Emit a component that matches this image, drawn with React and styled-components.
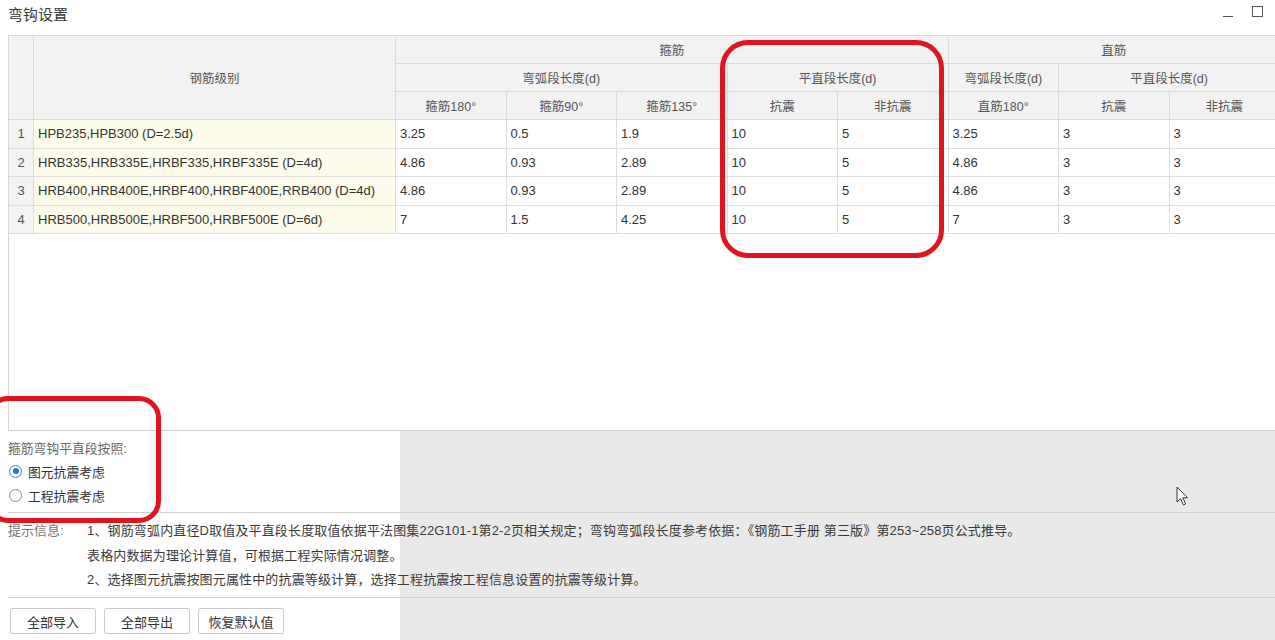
import React from 'react';
import styled, { createGlobalStyle } from 'styled-components';

const GlobalStyle = createGlobalStyle`
  html, body {
    margin: 0;
    padding: 0;
    background: #ffffff;
    font-family: "Liberation Sans", "Noto Sans CJK SC", sans-serif;
    color: #333;
    overflow: hidden;
  }
`;

const Window = styled.div`
  position: relative;
  width: 1275px;
  height: 640px;
  overflow: hidden;
  background: #fff;
`;

const TitleBar = styled.div`
  height: 35px;
  display: flex;
  align-items: center;
  justify-content: space-between;
  padding: 0 8px;
  box-sizing: border-box;
`;

const Title = styled.div`
  font-size: 15px;
  color: #3a3a3a;
  margin-top: -8px;
`;

const Controls = styled.div`
  display: flex;
  align-items: center;
  gap: 18px;
  margin-top: -12px;
  margin-right: 4px;
`;

const TablePanel = styled.div`
  margin-left: 8px;
  height: 396px;
  border-top: 1px solid #d6d6d6;
  border-left: 1px solid #d6d6d6;
  border-bottom: 1px solid #cfcfcf;
  box-sizing: border-box;
  overflow: hidden;
`;

const Grid = styled.table`
  border-collapse: collapse;
  table-layout: fixed;
  width: 1271px;
  margin: -1px 0 0 -1px;
  font-size: 13px;
`;

const HeadCell = styled.th`
  height: 28px;
  padding: 0 4px;
  box-sizing: border-box;
  background: #f2f2f2;
  border: 1px solid #dadada;
  font-weight: normal;
  font-size: 12.5px;
  color: #555;
  text-align: center;
  white-space: nowrap;
`;

const toneBg = {
  index: '#f3f3f3',
  grade: '#fdfbe9',
  value: '#ffffff',
};

const DataCell = styled.td`
  height: 28.5px;
  padding: 0 ${(p) => (p.$tone === 'index' ? '0' : '4px')};
  box-sizing: border-box;
  background: ${(p) => toneBg[p.$tone || 'value']};
  border: 1px solid #dedede;
  color: ${(p) => (p.$tone === 'index' ? '#555' : '#333')};
  text-align: ${(p) => (p.$tone === 'index' ? 'center' : 'left')};
  white-space: nowrap;
  overflow: hidden;
`;

const Bottom = styled.div`
  height: 209px;
  background: linear-gradient(to right, #ffffff 400px, #e9e9e9 400px);
`;

const OptionBlock = styled.div`
  margin-left: 8px;
  padding: 4px 0 6px;
  height: 82px;
  box-sizing: border-box;
  border-bottom: 1px solid #d2d2d2;
  font-size: 12.8px;
`;

const Line = styled.div`
  height: ${(p) => p.$h || 24}px;
  display: flex;
  align-items: center;
  color: ${(p) => (p.$muted ? '#666' : '#333')};
`;

const RadioDot = styled.span`
  width: 13px;
  height: 13px;
  margin: 0 6px 0 1px;
  border-radius: 50%;
  box-sizing: border-box;
  border: 1px solid ${(p) => (p.$on ? '#3b7ddd' : '#8a8a8a')};
  background: #fff;
  display: inline-flex;
  align-items: center;
  justify-content: center;

  &::after {
    content: '';
    width: 6px;
    height: 6px;
    border-radius: 50%;
    background: ${(p) => (p.$on ? '#2f6fd6' : 'transparent')};
  }
`;

const HintBlock = styled.div`
  margin-left: 8px;
  padding: 6px 0 4px;
  height: 85px;
  box-sizing: border-box;
  border-bottom: 1px solid #d2d2d2;
  display: grid;
  grid-template-columns: 79px 1fr;
  font-size: 13px;
`;

const HintLabel = styled.div`
  color: #777;
  line-height: 24.5px;
`;

const HintText = styled.div`
  color: #3a3a3a;
  line-height: 24.5px;
  white-space: nowrap;
  letter-spacing: 0.15px;
`;

const ButtonRow = styled.div`
  display: flex;
  gap: 8px;
  padding: 10px 0 0 10px;
`;

const Button = styled.button`
  width: 86px;
  height: 26px;
  border: 1px solid #c9c9c9;
  border-radius: 2px;
  background: #fff;
  font-family: inherit;
  font-size: 13px;
  color: #333;
  padding: 0;
`;

const Annotation = styled.div`
  position: absolute;
  left: ${(p) => p.$x}px;
  top: ${(p) => p.$y}px;
  width: ${(p) => p.$w}px;
  height: ${(p) => p.$h}px;
  border: 5px solid #e0141f;
  border-radius: ${(p) => p.$r}px;
  box-sizing: border-box;
  pointer-events: none;
`;

const Cursor = styled.svg`
  position: absolute;
  left: 1176px;
  top: 486px;
`;

const rows = [
  ['HPB235,HPB300 (D=2.5d)', '3.25', '0.5', '1.9', '10', '5', '3.25', '3', '3'],
  ['HRB335,HRB335E,HRBF335,HRBF335E (D=4d)', '4.86', '0.93', '2.89', '10', '5', '4.86', '3', '3'],
  ['HRB400,HRB400E,HRBF400,HRBF400E,RRB400 (D=4d)', '4.86', '0.93', '2.89', '10', '5', '4.86', '3', '3'],
  ['HRB500,HRB500E,HRBF500,HRBF500E (D=6d)', '7', '1.5', '4.25', '10', '5', '7', '3', '3'],
];

const App = () => {
  return (
    <Window>
      <GlobalStyle />
      <TitleBar>
        <Title>弯钩设置</Title>
        <Controls>
          <svg width="11" height="12" viewBox="0 0 11 12">
            <line x1="0" y1="10.5" x2="10" y2="10.5" stroke="#555" strokeWidth="1" />
          </svg>
          <svg width="11" height="11" viewBox="0 0 11 11">
            <rect x="0.5" y="0.5" width="10" height="10" fill="none" stroke="#555" strokeWidth="1" />
          </svg>
        </Controls>
      </TitleBar>

      <TablePanel>
        <Grid>
          <colgroup>
            <col style={{ width: 25 }} />
            <col style={{ width: 362 }} />
            {Array.from({ length: 8 }).map((_, i) => (
              <col key={i} style={{ width: 110.5 }} />
            ))}
          </colgroup>
          <thead>
            <tr>
              <HeadCell rowSpan={3} />
              <HeadCell rowSpan={3}>钢筋级别</HeadCell>
              <HeadCell colSpan={5}>箍筋</HeadCell>
              <HeadCell colSpan={3}>直筋</HeadCell>
            </tr>
            <tr>
              <HeadCell colSpan={3}>弯弧段长度(d)</HeadCell>
              <HeadCell colSpan={2}>平直段长度(d)</HeadCell>
              <HeadCell>弯弧段长度(d)</HeadCell>
              <HeadCell colSpan={2}>平直段长度(d)</HeadCell>
            </tr>
            <tr>
              <HeadCell>箍筋180°</HeadCell>
              <HeadCell>箍筋90°</HeadCell>
              <HeadCell>箍筋135°</HeadCell>
              <HeadCell>抗震</HeadCell>
              <HeadCell>非抗震</HeadCell>
              <HeadCell>直筋180°</HeadCell>
              <HeadCell>抗震</HeadCell>
              <HeadCell>非抗震</HeadCell>
            </tr>
          </thead>
          <tbody>
            {rows.map((row, i) => (
              <tr key={i}>
                <DataCell $tone="index">{i + 1}</DataCell>
                <DataCell $tone="grade">{row[0]}</DataCell>
                {row.slice(1).map((v, j) => (
                  <DataCell key={j}>{v}</DataCell>
                ))}
              </tr>
            ))}
          </tbody>
        </Grid>
      </TablePanel>

      <Bottom>
        <OptionBlock>
          <Line $muted>箍筋弯钩平直段按照:</Line>
          <Line>
            <RadioDot $on />
            图元抗震考虑
          </Line>
          <Line>
            <RadioDot />
            工程抗震考虑
          </Line>
        </OptionBlock>

        <HintBlock>
          <HintLabel>提示信息:</HintLabel>
          <HintText>
            1、钢筋弯弧内直径D取值及平直段长度取值依据平法图集22G101-1第2-2页相关规定；弯钩弯弧段长度参考依据：《钢筋工手册 第三版》第253~258页公式推导。
            <br />
            表格内数据为理论计算值，可根据工程实际情况调整。
            <br />
            2、选择图元抗震按图元属性中的抗震等级计算，选择工程抗震按工程信息设置的抗震等级计算。
          </HintText>
        </HintBlock>

        <ButtonRow>
          <Button>全部导入</Button>
          <Button>全部导出</Button>
          <Button>恢复默认值</Button>
        </ButtonRow>
      </Bottom>

      <Annotation $x={720} $y={40} $w={224} $h={218} $r={28} />
      <Annotation $x={-14} $y={396} $w={175} $h={127} $r={22} />

      <Cursor width="13" height="21" viewBox="0 0 13 21">
        <path
          d="M1 1 L1 16 L4.6 12.6 L7.4 19 L9.6 18 L6.9 11.8 L11.6 11.8 Z"
          fill="#fff"
          stroke="#333"
          strokeWidth="1"
          strokeLinejoin="round"
        />
      </Cursor>
    </Window>
  );
};

export default App;
